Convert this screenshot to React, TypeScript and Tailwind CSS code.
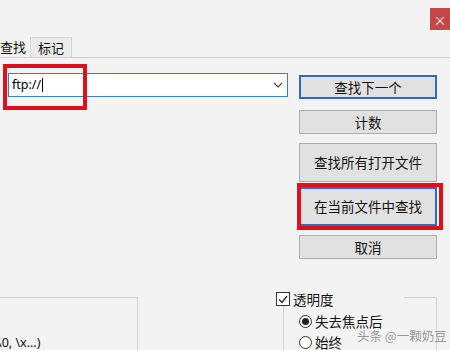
import React from "react";

const cjk = "font-['Microsoft_YaHei','Noto_Sans_CJK_SC',sans-serif]";

function Btn({ label, tall, focused }: { label: string; tall?: boolean; focused?: boolean }) {
  return (
    <div
      className={`flex items-center justify-center bg-[#e1e1e1] text-[13.5px] text-[#111] ${
        tall ? "h-[39px]" : "h-[24px]"
      } ${focused ? "border-2 border-[#2b6cc4]" : "border border-[#adadad]"}`}
    >
      {label}
    </div>
  );
}

export default function App() {
  return (
    <div className={`relative w-[450px] h-[350px] overflow-hidden bg-[#f3f3f3] ${cjk}`}>
      {/* title strip */}
      <div className="h-[37px] flex justify-end items-start pt-[8px]">
        <div className="w-[20px] h-[22px] bg-[#c84646] flex items-center justify-center text-white text-[13px] leading-none">
          ×
        </div>
      </div>

      {/* tabs */}
      <div className="h-[21px] flex items-end border-b border-[#cfcfcf] text-[13px] text-[#111]">
        <div className="h-[20px] w-[31px] shrink-0 flex items-center justify-end pr-[4px] whitespace-nowrap overflow-hidden bg-[#f2f2f2] border-r border-[#d6d6d6]">
          <span className="shrink-0">查找</span>
        </div>
        <div className="h-[20px] w-[41px] shrink-0 flex items-center justify-center whitespace-nowrap bg-[#ebebeb] border-r border-t border-[#d6d6d6]">
          标记
        </div>
      </div>

      {/* search row */}
      <div className="flex">
        <div className="w-[299px] pl-[8px] pt-[15px]">
          <div className="w-[280px] h-[24px] border border-[#3b7fc0] bg-white flex items-center pl-[3px] pr-[4px]">
            <span className="font-['Noto_Sans',sans-serif] text-[12.5px] text-black">ftp://</span>
            <span className="w-px h-[14px] bg-black ml-[1px]" />
            <div className="flex-1" />
            <svg width="10" height="6" viewBox="0 0 10 6">
              <path d="M1 1 L5 5 L9 1" fill="none" stroke="#444" strokeWidth="1.2" />
            </svg>
          </div>
        </div>
        <div className="w-[138px] pt-[17px] flex flex-col">
          <Btn label="查找下一个" focused />
          <div className="mt-[11px]">
            <Btn label="计数" />
          </div>
          <div className="mt-[9px]">
            <Btn label="查找所有打开文件" tall />
          </div>
          <div className="mt-[5px]">
            <Btn label="在当前文件中查找" tall focused />
          </div>
          <div className="mt-[9px]">
            <Btn label="取消" />
          </div>
        </div>
      </div>

      {/* lower options */}
      <div className="flex">
        <div className="w-[138px] mt-[38px] h-[60px] border-t border-r border-[#d3d3d3] pt-[37px]">
          <div className="-ml-[3px] font-['Noto_Sans',sans-serif] text-[12.5px] text-[#111] leading-[16px] whitespace-nowrap">
            \0, \x...)
          </div>
        </div>
        <div className="ml-[138px] w-[161px] mt-[33px] flex flex-col">
          <div className="flex h-[14px]">
            <div className="w-[14px] h-[14px] border border-[#333] bg-white flex items-center justify-center">
              <svg width="10" height="9" viewBox="0 0 10 9">
                <path d="M1 4.5 L4 7.5 L9 1" fill="none" stroke="#222" strokeWidth="1.3" />
              </svg>
            </div>
            <span className="ml-[3px] text-[13.5px] leading-[14px] text-[#111]">透明度</span>
            <div className="ml-[70px] flex-1 mt-[5px] h-[9px] border-t border-r border-[#d3d3d3]" />
          </div>
          <div className="ml-[7px] h-[60px] border-l border-r border-[#d3d3d3] pl-[15px] pt-[9px] flex flex-col gap-[8px] text-[13.5px] text-[#111]">
            <div className="flex items-center h-[13px]">
              <div className="w-[13px] h-[13px] rounded-full border border-[#333] bg-white flex items-center justify-center">
                <div className="w-[7px] h-[7px] rounded-full bg-[#222]" />
              </div>
              <span className="ml-[3px]">失去焦点后</span>
            </div>
            <div className="flex items-center h-[13px]">
              <div className="w-[13px] h-[13px] rounded-full border border-[#333] bg-white" />
              <span className="ml-[3px]">始终</span>
            </div>
          </div>
        </div>
      </div>

      {/* red annotation boxes */}
      <div className="absolute left-[3px] top-[64px] w-[84px] h-[46px] border-4 border-[#e0101a]" />
      <div className="absolute left-[297px] top-[183px] w-[146px] h-[47px] border-4 border-[#e0101a]" />

      {/* watermark */}
      <div className="absolute left-[357px] top-[327px] text-[12.5px] text-[#8a8a8a]/90">
        头条 @一颗奶豆
      </div>
    </div>
  );
}
